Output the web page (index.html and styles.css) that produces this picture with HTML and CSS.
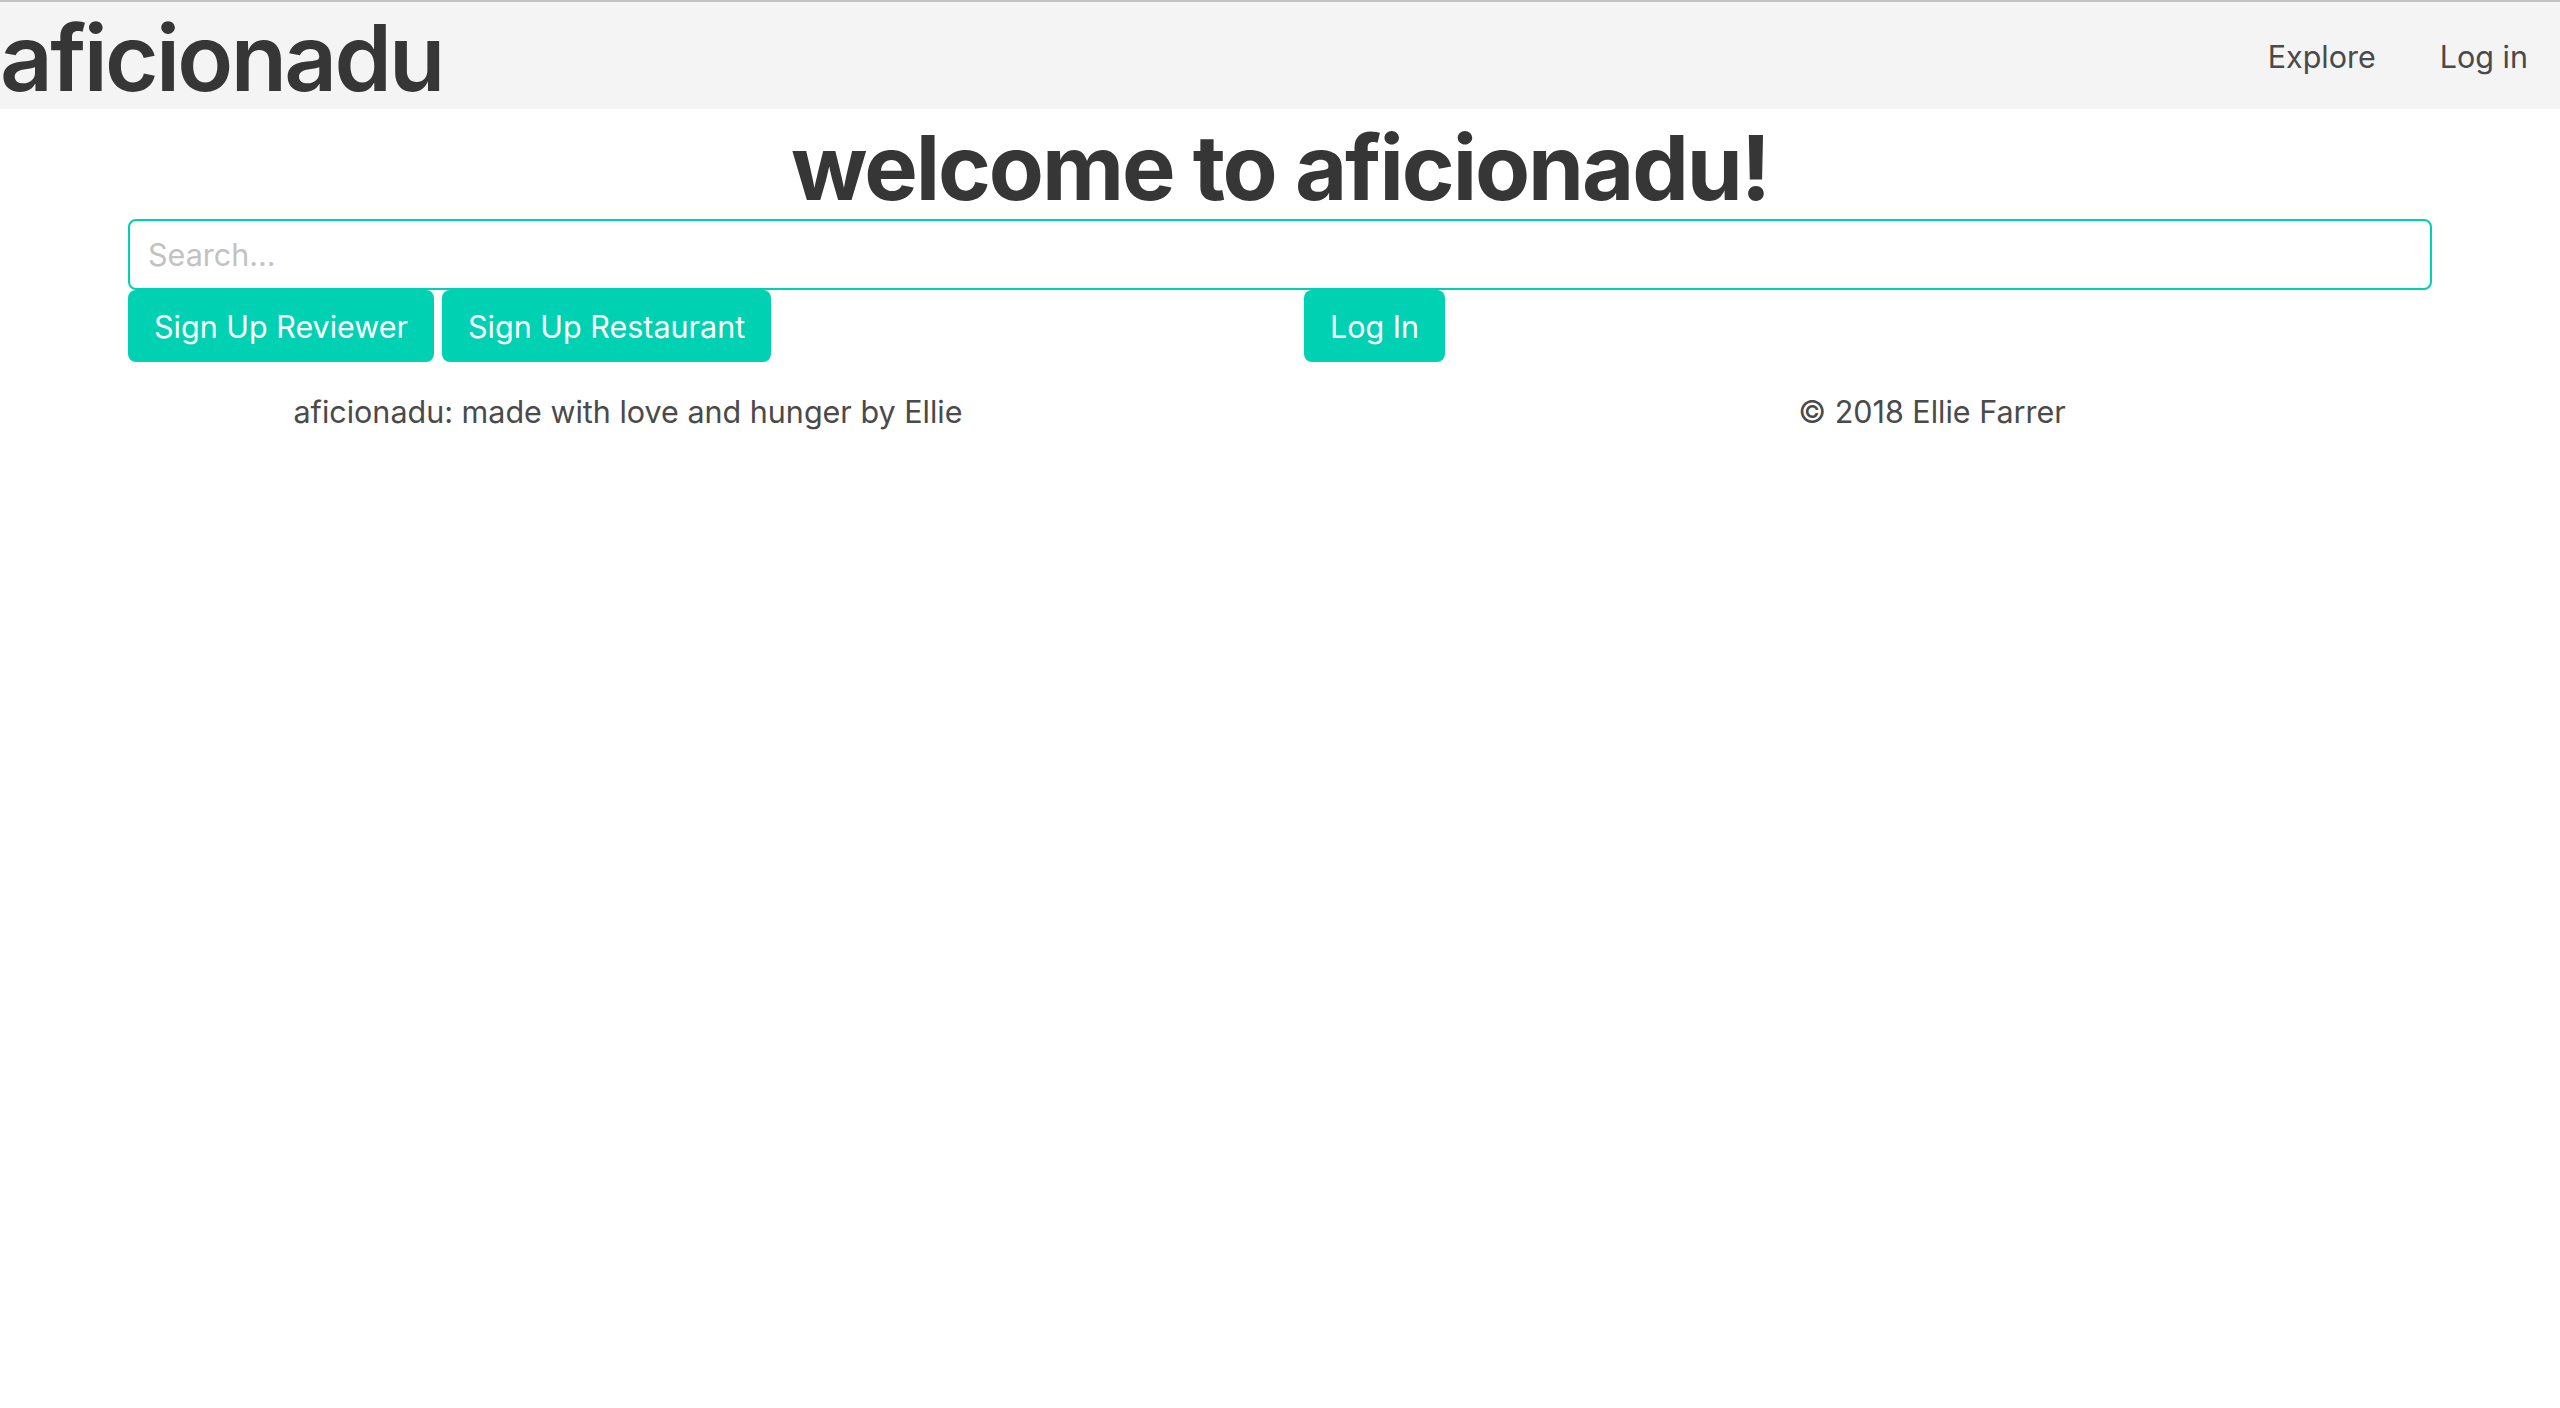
FILE: index.html
```html
<!DOCTYPE html>
<html lang="en">
<head>
<meta charset="utf-8">
<title>aficionadu</title>
<link rel="stylesheet" href="styles.css">
</head>
<body>
<nav class="navbar">
  <a class="brand" href="#">aficionadu</a>
  <div class="navbar-end">
    <a class="nav-item" href="#">Explore</a>
    <a class="nav-item" href="#">Log in</a>
  </div>
</nav>
<main class="container">
  <h1 class="welcome">welcome to aficionadu!</h1>
  <input class="search" type="text" placeholder="Search...">
  <div class="columns">
    <div class="column">
      <button class="btn">Sign Up Reviewer</button>
      <button class="btn">Sign Up Restaurant</button>
    </div>
    <div class="column">
      <button class="btn">Log In</button>
    </div>
  </div>
</main>
<footer class="footer">
  <div class="footer-columns">
    <p class="footer-col">aficionadu: made with love and hunger by Ellie</p>
    <p class="footer-col">© 2018 Ellie Farrer</p>
  </div>
</footer>
</body>
</html>
```
FILE: styles.css
```css
html, body {
  margin: 0;
  padding: 0;
  background: #ffffff;
}
body {
  font-family: Inter, "Noto Sans", "Liberation Sans", sans-serif;
  color: #4a4a4a;
  font-size: 30.5px;
  line-height: 1.5;
}
.navbar {
  display: flex;
  align-items: center;
  justify-content: space-between;
  height: 107px;
  background: #f4f4f4;
  border-top: 2px solid #c4c4c4;
}
.brand {
  font-size: 92px;
  font-weight: 600;
  letter-spacing: -2.7px;
  line-height: 1;
  color: #363636;
  text-decoration: none;
  padding-top: 5px;
}
.navbar-end {
  display: flex;
  align-items: center;
  gap: 64px;
  padding-right: 32px;
  padding-top: 3px;
}
.nav-item {
  color: #4a4a4a;
  text-decoration: none;
  font-size: 30.5px;
}
.container {
  width: 2304px;
  margin: 0 auto;
}
.welcome {
  margin: 0;
  padding-top: 8px;
  height: 102px;
  font-size: 90px;
  line-height: 101px;
  font-weight: 700;
  letter-spacing: -2.1px;
  text-align: center;
  color: #363636;
}
.search {
  display: block;
  box-sizing: border-box;
  width: 100%;
  height: 71px;
  margin: 0;
  padding: 0 18px;
  border: 2px solid #00d1b2;
  border-radius: 8px;
  font-family: inherit;
  font-size: 30.5px;
  color: #363636;
  box-shadow: inset 0 2px 4px rgba(10, 10, 10, 0.05);
  outline: none;
}
.search::placeholder {
  color: #c2c2c2;
}
.columns {
  display: flex;
  margin: 0 -24px;
}
.column {
  flex: 1 1 0;
  padding: 0 24px;
  display: flex;
  gap: 8px;
}
.btn {
  height: 72px;
  padding: 0 26px;
  border: none;
  border-radius: 8px;
  background: #00d1b2;
  color: #ffffff;
  font-family: inherit;
  font-size: 30.5px;
  cursor: pointer;
}
.footer {
  overflow: hidden;
  margin-top: 27px;
}
.footer-columns {
  display: flex;
  margin: 0 -24px;
}
.footer-col {
  flex: 1 1 0;
  margin: 0;
  text-align: center;
  color: #4a4a4a;
}
```
